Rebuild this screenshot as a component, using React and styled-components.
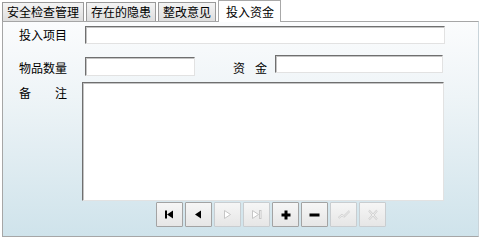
import React from "react";
import styled, { createGlobalStyle, css } from "styled-components";

const Global = createGlobalStyle`
  html, body { margin: 0; padding: 0; background: #ffffff; }
  body { font-family: "Noto Sans CJK SC", "Noto Sans", sans-serif; font-size: 12px; color: #000; }
`;

const Frame = styled.div`
  width: 480px;
  height: 240px;
  box-sizing: border-box;
  padding: 0 1px 0 2px;
  display: flex;
  flex-direction: column;
`;

const TabBar = styled.div`
  display: flex;
  align-items: flex-end;
  height: 21px;
  position: relative;
  z-index: 1;
`;

const Tab = styled.div`
  box-sizing: border-box;
  height: 19px;
  margin-right: 2px;
  margin-bottom: 0;
  padding: 0 4px;
  border: 1px solid #9a9a9a;
  border-bottom: none;
  background: linear-gradient(#f4f4f4, #dedede);
  line-height: 17px;
  white-space: nowrap;
  ${(p) =>
    p.$active &&
    css`
      height: 22px;
      margin-bottom: -1px;
      padding: 0 6px 0 7px;
      background: #ffffff;
      border-color: #a8a8a8;
      line-height: 21px;
    `}
`;

const Panel = styled.div`
  box-sizing: border-box;
  height: 216px;
  border: 1px solid #a6a6a6;
  border-right-color: #c9d4da;
  background: linear-gradient(#fbfcfd 0%, #eef4f7 35%, #cfe3eb 100%);
  display: flex;
  flex-direction: column;
  padding: 4px 0 0 16px;
`;

const Row = styled.div`
  display: flex;
  align-items: ${(p) => p.$align || "center"};
  margin-top: ${(p) => p.$gap || 0}px;
`;

const Label = styled.div`
  width: ${(p) => p.$width || 48}px;
  margin-right: ${(p) => p.$after || 18}px;
  margin-left: ${(p) => p.$before || 0}px;
  margin-top: ${(p) => p.$top || 0}px;
  display: flex;
  justify-content: space-between;
  line-height: 14px;
  white-space: nowrap;
`;

const fieldBorder = css`
  box-sizing: border-box;
  border: 1px solid;
  border-color: #6f6f6f #e2e2e2 #e2e2e2 #6f6f6f;
  box-shadow: inset 1px 1px 0 #c4c4c4;
  background: #ffffff;
  font-family: inherit;
  font-size: 12px;
  outline: none;
  margin: 0;
`;

const Input = styled.input`
  ${fieldBorder};
  width: ${(p) => p.$width}px;
  height: ${(p) => p.$height || 18}px;
  margin-top: ${(p) => p.$top || 0}px;
  padding: 0 2px;
`;

const TextArea = styled.textarea`
  ${fieldBorder};
  width: 362px;
  height: 119px;
  resize: none;
  margin-left: -3px;
`;

const NavBar = styled.div`
  display: flex;
  gap: 2px;
  margin: 1px 0 0 137px;
`;

const NavButton = styled.button`
  box-sizing: border-box;
  width: 27px;
  height: 25px;
  padding: 0;
  margin: 0;
  border: 1px solid ${(p) => (p.$dim ? "#c9cdd0" : "#a3a3a3")};
  border-radius: 1px;
  background: linear-gradient(#f6f6f6, #e6e6e6);
  display: flex;
  align-items: center;
  justify-content: center;
  svg { display: block; }
`;

const dim = { fill: "#ffffff", stroke: "#c6c6c6", strokeWidth: 1 };

const icons = {
  first: (
    <svg width="11" height="9" viewBox="0 0 11 9">
      <rect x="1" y="0.5" width="2" height="8" fill="#000" />
      <polygon points="3,4.5 9,0.5 9,8.5" fill="#000" />
    </svg>
  ),
  prev: (
    <svg width="11" height="9" viewBox="0 0 11 9">
      <polygon points="2,4.5 8,0.5 8,8.5" fill="#000" />
    </svg>
  ),
  next: (
    <svg width="11" height="11" viewBox="0 0 11 11">
      <polygon points="2.5,1.5 8.5,5.5 2.5,9.5" {...dim} />
    </svg>
  ),
  last: (
    <svg width="12" height="11" viewBox="0 0 12 11">
      <polygon points="1.5,1.5 7.5,5.5 1.5,9.5" {...dim} />
      <rect x="8.5" y="1.5" width="1.5" height="8" {...dim} />
    </svg>
  ),
  add: (
    <svg width="10" height="10" viewBox="0 0 10 10">
      <rect x="3.5" y="0.5" width="3" height="9" fill="#000" />
      <rect x="0.5" y="3.5" width="9" height="3" fill="#000" />
    </svg>
  ),
  remove: (
    <svg width="11" height="4" viewBox="0 0 11 4">
      <rect x="0.5" y="0.5" width="10" height="3" fill="#000" />
    </svg>
  ),
  post: (
    <svg width="14" height="11" viewBox="0 0 14 11">
      <polyline points="1.5,9 5,6 7,7.5 12.5,2" fill="none" stroke="#cccccc" strokeWidth="2" strokeLinejoin="round" />
      <polyline points="1.5,9 5,6 7,7.5 12.5,2" fill="none" stroke="#f4f4f4" strokeWidth="0.9" strokeLinejoin="round" />
    </svg>
  ),
  cancel: (
    <svg width="12" height="12" viewBox="0 0 12 12">
      <path d="M2 1.5 L10 10.5 M10 1.5 L2 10.5" fill="none" stroke="#cccccc" strokeWidth="2" />
      <path d="M2 1.5 L10 10.5 M10 1.5 L2 10.5" fill="none" stroke="#f4f4f4" strokeWidth="0.9" />
    </svg>
  ),
};

const buttons = [
  { key: "first" },
  { key: "prev" },
  { key: "next", dim: true },
  { key: "last", dim: true },
  { key: "add" },
  { key: "remove" },
  { key: "post", dim: true },
  { key: "cancel", dim: true },
];

const tabs = ["安全检查管理", "存在的隐患", "整改意见", "投入资金"];

export default function App() {
  return (
    <>
      <Global />
      <Frame>
        <TabBar>
          {tabs.map((t, i) => (
            <Tab key={t} $active={i === 3}>
              {t}
            </Tab>
          ))}
        </TabBar>
        <Panel>
          <Row>
            <Label>投入项目</Label>
            <Input $width={360} />
          </Row>
          <Row $gap={11} $align="flex-start">
            <Label $top={6}>物品数量</Label>
            <Input $width={110} $height={19} $top={2} />
            <Label $width={34} $before={38} $after={8} $top={6}>
              <span>资</span>
              <span>金</span>
            </Label>
            <Input $width={168} />
          </Row>
          <Row $gap={6} $align="flex-start">
            <Label $top={4}>
              <span>备</span>
              <span>注</span>
            </Label>
            <TextArea />
          </Row>
          <NavBar>
            {buttons.map((b) => (
              <NavButton key={b.key} $dim={b.dim}>
                {icons[b.key]}
              </NavButton>
            ))}
          </NavBar>
        </Panel>
      </Frame>
    </>
  );
}
